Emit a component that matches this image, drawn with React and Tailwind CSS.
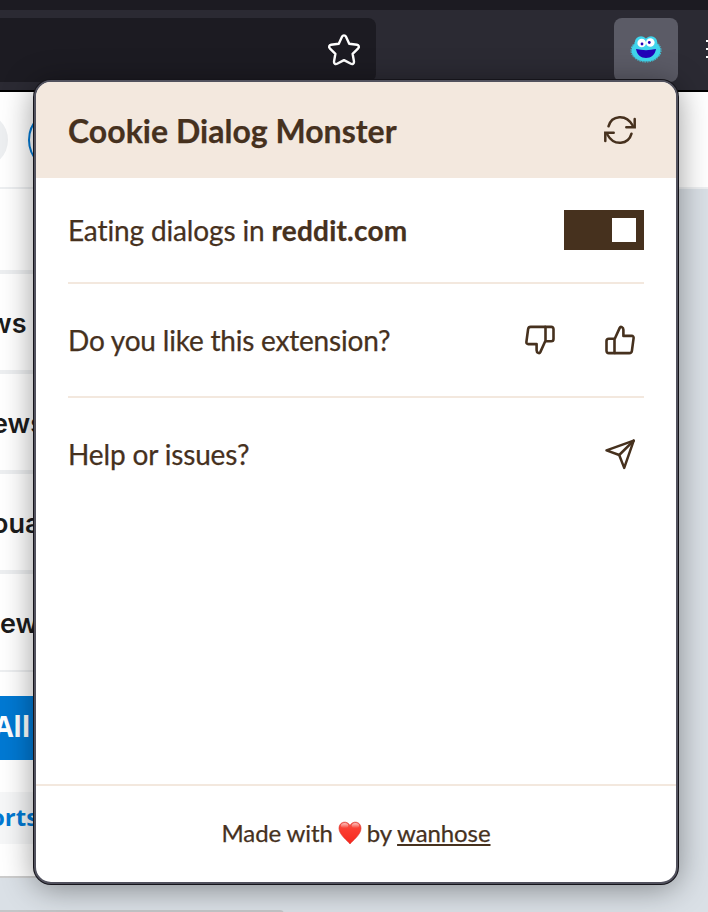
import React from "react";

const strokeProps = {
  fill: "none",
  stroke: "currentColor",
  strokeLinecap: "round",
  strokeLinejoin: "round",
};

function StarIcon() {
  return (
    <svg width="34" height="34" viewBox="0 0 34 34" className="text-white" {...strokeProps} strokeWidth="2.4">
      <path d="M15.100 3.600c.8-1.700 3-1.700 3.800 0l3.300 7.100 7.800 1c1.800.2 2.500 2.300 1.200 3.600l-5.600 5.500 1.400 7.700c.3 1.900-1.500 3.200-3.100 2.300L17 27.100l-6.900 3.700c-1.600.9-3.400-.4-3.100-2.300l1.400-7.700-5.600-5.500C1.500 14 2.200 11.900 4 11.700l7.800-1z" />
    </svg>
  );
}

function MonsterIcon() {
  return (
    <svg width="32" height="28" viewBox="0 0 32 28">
      <ellipse cx="16" cy="15.500" rx="14.500" ry="11" fill="#40d5ec" />
      <ellipse cx="16" cy="15.500" rx="15" ry="11.500" fill="none" stroke="#40d5ec" strokeWidth="1" strokeDasharray="1.600 1" />
      <circle cx="11" cy="7.500" r="6.200" fill="#40d5ec" />
      <circle cx="21" cy="7.500" r="6.200" fill="#40d5ec" />
      <circle cx="11.700" cy="8" r="4.300" fill="#fff" />
      <circle cx="20.300" cy="7.500" r="4.300" fill="#fff" />
      <circle cx="12" cy="9" r="1.400" fill="#2200b8" />
      <circle cx="19.300" cy="7.500" r="1.400" fill="#2200b8" />
      <path d="M6 14Q16 16.300 26 14C25 20 21 23 16 23S7 20 6 14Z" fill="#2200b8" />
    </svg>
  );
}

function RefreshIcon() {
  return (
    <svg width="40" height="40" viewBox="0 0 40 40" {...strokeProps} strokeWidth="2.500" strokeLinejoin="miter">
      <path d="M8.500 16.300C11.500 5.300 26 3.300 32.700 15.500" />
      <path d="M26.300 17.300h8.400V8.900" />
      <path d="M31.500 23.700C28.500 34.700 14 36.700 7.300 24.500" />
      <path d="M13.700 22.700H5.300v8.400" />
    </svg>
  );
}

function ThumbIcon({ down }) {
  return (
    <svg width="40" height="40" viewBox="0 0 40 40" className={down ? "rotate-180" : ""} {...strokeProps} strokeWidth="2.600">
      <path d="M15 18.200l4.700-10.300c.5-1 1.300-1.200 2.100-.8 1 .5 1.600 1.500 1.600 2.700v6.100h8.300c1.300 0 2.100.9 1.900 2.200l-1.700 12.700c-.2 1.400-1.200 2.300-2.600 2.300H15" />
      <path d="M14.500 18.700v14.400H8.800c-1.400 0-2.300-.9-2.300-2.300V21c0-1.400.9-2.300 2.300-2.300z" />
    </svg>
  );
}

function SendIcon() {
  return (
    <svg width="40" height="40" viewBox="0 0 40 40" {...strokeProps} strokeWidth="2.500">
      <path d="M33.700 6.600L6.500 16.400l12.700 4.600 5 12.900z" />
      <path d="M33.700 6.600L19.200 21" />
    </svg>
  );
}

function Heart() {
  return (
    <svg width="24" height="24" viewBox="0 0 24 24" className="inline-block">
      <defs>
        <linearGradient id="heart" x1="0" y1="0" x2="0" y2="1">
          <stop offset="0" stopColor="#f4584d" />
          <stop offset=".35" stopColor="#fb3c30" />
          <stop offset="1" stopColor="#f5271d" />
        </linearGradient>
        <linearGradient id="shine" x1="0" y1="0" x2="0" y2="1">
          <stop offset="0" stopColor="#fff" stopOpacity=".65" />
          <stop offset="1" stopColor="#fff" stopOpacity="0" />
        </linearGradient>
      </defs>
      <path d="M12 23C10 20 1 14 1 7.300 1 .2 9.500-.8 12 4.500 14.500-.8 23 .2 23 7.300 23 14 14 20 12 23Z" fill="url(#heart)" stroke="#d82c24" strokeWidth=".6" />
      <ellipse cx="6.600" cy="4.500" rx="3.700" ry="2.600" fill="url(#shine)" />
      <ellipse cx="17.400" cy="4.500" rx="3.700" ry="2.600" fill="url(#shine)" />
    </svg>
  );
}

function Toolbar() {
  return (
    <header className="flex h-[92px] shrink-0 flex-col border-b-2 border-black bg-[#2b2a33]">
      <div className="h-[10px] shrink-0 bg-[#1c1b22]" />
      <div className="flex flex-1 items-start pt-2">
        <div className="flex h-16 w-[376px] shrink-0 items-center justify-end rounded-r-lg bg-[#1c1b22] pr-[15px]">
          <StarIcon />
        </div>
        <div className="ml-[238px] flex h-16 w-16 shrink-0 items-center justify-center rounded-lg bg-[#5b5b66] pb-0.5">
          <MonsterIcon />
        </div>
        <div className="ml-7 mt-[22px] flex w-4 shrink-0 flex-col gap-[6px]">
          <div className="h-[2px] bg-white" />
          <div className="h-[2px] bg-white" />
          <div className="h-[2px] bg-white" />
        </div>
      </div>
    </header>
  );
}

function Community({ children, shift }) {
  return (
    <div className="flex h-[100px] shrink-0 items-center border-b-4 border-[#edeff1] pt-1">
      <span className={`whitespace-nowrap text-[27px] font-semibold ${shift}`}>{children}</span>
    </div>
  );
}

function Page() {
  return (
    <main className="flex flex-1 flex-col overflow-hidden bg-[#dae0e6]">
      <div className="flex h-[97px] shrink-0 items-center overflow-hidden border-b-2 border-[#edeff1] bg-white">
        <div className="-ml-[48px] h-14 w-14 shrink-0 rounded-full bg-[#edeff1]" />
        <div className="ml-5 h-[64px] w-[300px] shrink-0 rounded-full border-2 border-[#0079d3]" />
      </div>
      <aside className="flex h-[689px] w-[300px] shrink-0 flex-col overflow-hidden border-b-2 border-[#ccc] bg-white font-['Inter','Liberation_Sans',sans-serif] text-[#1c1c1c]">
        <div className="h-[85px] shrink-0 border-b-4 border-[#edeff1]" />
        <Community shift="-ml-[11px]">ws</Community>
        <Community shift="-ml-[8px]">ews</Community>
        <Community shift="-ml-[8px]">oua</Community>
        <div className="flex h-[98px] shrink-0 items-center border-b-2 border-[#edeff1] pt-1">
          <span className="text-[27px] font-semibold">ew</span>
        </div>
        <div className="mt-6 flex h-16 shrink-0 items-center bg-[#0079d3] pb-1 font-['Open_Sans',sans-serif] text-[28px] font-bold text-white">
          <span className="-ml-[6px]">All</span>
        </div>
        <div className="mt-8 flex h-[52px] shrink-0 items-center bg-[#f6f7f8] pb-[3px] font-['Open_Sans',sans-serif] text-2xl font-bold text-[#0079d3]">
          <span className="-ml-[10px]">orts</span>
        </div>
      </aside>
      <div className="mt-8 h-2 w-[284px] shrink-0 rounded-tr bg-[#c4c6c8]" />
    </main>
  );
}

function Popup() {
  return (
    <section className="absolute left-[34px] top-20 flex h-[804px] w-[644px] flex-col overflow-hidden rounded-[17px] border-2 border-[#52525e] bg-white font-['Lato',sans-serif] text-[#46311e] shadow-[0_0_0_1px_#15141a,0_4px_32px_rgba(0,0,0,0.42)] [-webkit-text-stroke:0.25px_#46311e] [font-variant-ligatures:none]">
      <header className="flex h-24 shrink-0 items-center justify-between bg-[#f3e8de] pl-8 pr-9">
        <h1 className="pb-0.5 pt-1 text-[32px] font-bold tracking-[0.03px]">Cookie Dialog Monster</h1>
        <RefreshIcon />
      </header>
      <div className="flex flex-1 flex-col px-8 text-[28px]">
        <div className="flex h-[106px] items-center justify-between border-b-2 border-[#f3e8de]">
          <p className="tracking-[-0.13px]">Eating dialogs in <b className="tracking-[0.2px]">reddit.com</b></p>
          <div className="flex h-10 w-20 items-center justify-end bg-[#46311e] pr-2">
            <div className="h-6 w-6 bg-white" />
          </div>
        </div>
        <div className="flex h-[114px] items-center justify-between border-b-2 border-[#f3e8de]">
          <p className="tracking-[-0.2px]">Do you like this extension?</p>
          <div className="flex gap-10 pr-1">
            <ThumbIcon down />
            <ThumbIcon />
          </div>
        </div>
        <div className="flex h-[112px] items-center justify-between pr-1">
          <p className="tracking-[-0.15px]">Help or issues?</p>
          <SendIcon />
        </div>
      </div>
      <footer className="flex h-[98px] shrink-0 items-center justify-center border-t-2 border-[#f3e8de] pb-0.5 text-2xl tracking-[-0.1px]">
        <span>Made with</span>
        <span className="mx-[5px] flex"><Heart /></span>
        <span>by <a className="underline decoration-[1.5px] underline-offset-2">wanhose</a></span>
      </footer>
    </section>
  );
}

export default function App() {
  return (
    <div className="relative flex h-[912px] w-[708px] flex-col overflow-hidden">
      <Toolbar />
      <Page />
      <Popup />
    </div>
  );
}
